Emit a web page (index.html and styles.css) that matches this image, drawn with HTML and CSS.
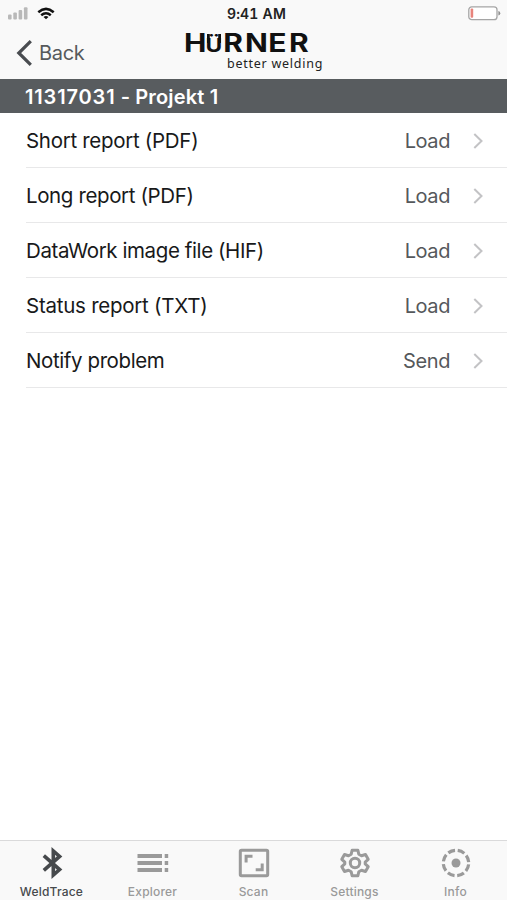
FILE: index.html
```html
<!DOCTYPE html>
<html lang="en">
<head>
<meta charset="utf-8">
<title>WeldTrace</title>
<link rel="stylesheet" href="styles.css">
</head>
<body>
<div class="app">
  <header class="top">
    <div class="status">
      <div class="signals">
        <svg width="20" height="13" viewBox="0 0 20 13" fill="#b9b9b9"><rect x="0" y="7.5" width="3.6" height="5" rx="1"/><rect x="5.3" y="5.5" width="3.6" height="7" rx="1"/><rect x="10.6" y="3" width="3.6" height="9.5" rx="1"/><rect x="15.9" y="0.3" width="3.6" height="12.2" rx="1"/></svg>
        <svg width="18" height="13" viewBox="0 0 18 13" fill="none" stroke="#111" stroke-width="2.5"><path d="M1.3 5.2Q9-1.5 16.7 5.2"/><path d="M4.2 8.2Q9 4.2 13.8 8.2"/><path d="M9 12.3L6.5 9.9Q9 7.9 11.5 9.9Z" fill="#111" stroke="none"/></svg>
      </div>
      <div class="clock">9:41 AM</div>
      <svg class="battery" width="33" height="15" viewBox="0 0 33 15"><rect x=".8" y=".8" width="28.2" height="12.9" rx="3" fill="#fff" stroke="#a5a5a5" stroke-width="1.3"/><rect x="2.6" y="2.6" width="2.6" height="9.2" rx="1" fill="#e8847c"/><path d="M30.4 5Q32.3 5.5 32.3 7.2T30.4 9.5Z" fill="#8f8f8f"/></svg>
    </div>
    <nav class="nav">
      <a class="back"><svg width="17" height="28" viewBox="0 0 17 28" fill="none" stroke="#494c50" stroke-width="3.2"><path d="M14.8 2.1L2.8 14L14.8 25.9"/></svg><span>Back</span></a>
      <div class="brand">
        <svg class="wordmark" width="128" height="20" viewBox="0 0 128 20">
          <text class="name" transform="scale(1.2 1)" y="19" x="-0.9 17 31.9 50.1 69.3 86.7">H<tspan class="umlaut">Ü</tspan>RNER</text>
          <path d="M22 1h2.8v9h-2.8zM33.2 1h2.8v9h-2.8z"/>
        </svg>
        <div class="slogan">better welding</div>
      </div>
    </nav>
  </header>
  <h1 class="title"><span class="serial">11317031</span> - Projekt 1</h1>
  <main class="list">
    <div class="row"><span class="label l1">Short report (PDF)</span><span class="action">Load</span><svg class="chev" viewBox="0 0 12 18"><path d="M2.3 2L9.5 9L2.3 16"/></svg></div>
    <div class="row"><span class="label l2">Long report (PDF)</span><span class="action">Load</span><svg class="chev" viewBox="0 0 12 18"><path d="M2.3 2L9.5 9L2.3 16"/></svg></div>
    <div class="row"><span class="label l3">DataWork image file (HIF)</span><span class="action">Load</span><svg class="chev" viewBox="0 0 12 18"><path d="M2.3 2L9.5 9L2.3 16"/></svg></div>
    <div class="row"><span class="label l4">Status report (TXT)</span><span class="action">Load</span><svg class="chev" viewBox="0 0 12 18"><path d="M2.3 2L9.5 9L2.3 16"/></svg></div>
    <div class="row"><span class="label l5">Notify problem</span><span class="action">Send</span><svg class="chev" viewBox="0 0 12 18"><path d="M2.3 2L9.5 9L2.3 16"/></svg></div>
  </main>
  <footer class="tabs">
    <a class="tab active"><svg viewBox="0 0 32 32"><path fill="none" stroke="currentColor" stroke-width="3.6" d="M7.8 8.6L23.6 22.6L17.3 28V4L23.6 9.4L7.8 23.4"/></svg><span>WeldTrace</span></a>
    <a class="tab"><svg viewBox="0 0 32 32"><path fill="currentColor" d="M.5 7H25v4H.5zM.5 14H25v4H.5zM.5 21H25v4H.5zM27.7 7h3.5v4h-3.5zM27.7 14h3.5v4h-3.5zM27.7 21h3.5v4h-3.5z"/></svg><span>Explorer</span></a>
    <a class="tab"><svg viewBox="0 0 32 32" fill="none" stroke="currentColor" stroke-width="3"><rect x="2.3" y="3.3" width="27.4" height="25.4" rx="1.2"/><path d="M8.1 15.5V9.2H14.5M24.2 16.5V22.8H17.7"/></svg><span>Scan</span></a>
    <a class="tab"><svg viewBox="0 0 32 32" fill="none" stroke="currentColor" stroke-width="3" stroke-linejoin="round"><path d="M13.1 3.2H18.9L19.8 7.3L22.5 8.8L26.5 7.5L29.2 12.3L26.2 15.1V16.9L29.2 19.7L26.5 24.5L22.5 23.2L19.8 24.7L18.9 28.8H13.1L12.2 24.7L9.5 23.2L5.5 24.5L2.8 19.7L5.8 16.9V15.1L2.8 12.3L5.5 7.5L9.5 8.8L12.2 7.3Z"/><circle cx="16" cy="16" r="4.7"/></svg><span>Settings</span></a>
    <a class="tab"><svg viewBox="0 0 32 32"><circle cx="16" cy="16" r="4.5" fill="currentColor"/><circle cx="16" cy="16" r="12.7" fill="none" stroke="currentColor" stroke-width="3.2" stroke-dasharray="7.2 2.775" stroke-dashoffset="-1.39"/></svg><span>Info</span></a>
  </footer>
</div>
</body>
</html>
```

FILE: styles.css
```css
* { box-sizing: border-box; }
body { margin: 0; background: #fff; font-family: Inter, "Liberation Sans", sans-serif; }
svg { display: block; flex: none; overflow: visible; }
.app { height: 900px; display: flex; flex-direction: column; overflow: hidden; }
.top { height: 79px; background: #f9f9f9; }
.status { height: 27px; display: grid; grid-template-columns: 1fr auto 1fr; align-items: center; padding: 0 6px 0 8px; }
.signals { display: flex; gap: 9px; }
.clock { font-size: 14px; font-weight: 600; color: #222; line-height: 27px; padding: 0 0 0 4px; letter-spacing: .2px; font-variant-numeric: tabular-nums; }
.battery { justify-self: end; }
.nav { height: 52px; display: grid; grid-template-columns: 185px 1fr; }
.back { display: flex; align-items: center; gap: 6px; height: 51px; padding-left: 16px; font-size: 20px; letter-spacing: -.3px; color: #56595c; }
.brand { padding-top: 6px; }
.name { font-size: 25px; font-weight: 700; fill: #111; }
.umlaut { font-size: 19px; }
.wordmark path { fill: #111; }
.slogan { margin: 3px 0 0 42px; font: 12.5px/16px "Noto Sans", sans-serif; letter-spacing: .75px; color: #222; white-space: nowrap; }
.title { margin: 0; height: 34px; padding-left: 25px; line-height: 36px; background: #585c5f; color: #fff; font-size: 20px; font-weight: 600; letter-spacing: .15px; }
.serial { letter-spacing: .85px; }
.list { flex: 1; padding-left: 26px; }
.row { height: 55px; display: flex; align-items: center; border-bottom: 1px solid #e8e8e9; padding: 2px 23px 0 0; font-size: 20px; }
.label { flex: 1; margin-top: -2px; color: #18191a; white-space: nowrap; font-size: 20.5px; }
.l1 { letter-spacing: -.3px; }
.l2 { letter-spacing: -.38px; }
.l3 { letter-spacing: -.4px; }
.l4 { letter-spacing: -.25px; }
.l5 { letter-spacing: -.4px; }
.action { color: #55585b; letter-spacing: -.4px; }
.chev { width: 12px; height: 18px; margin-left: 22px; fill: none; stroke: #c3c3c5; stroke-width: 2; }
.tabs { height: 60px; border-top: 1px solid #dadadb; background: #f9f9f9; display: grid; grid-template-columns: repeat(5, 1fr); padding: 0 1px; }
.tab { display: flex; flex-direction: column; align-items: center; padding-top: 6px; color: #9a9a9a; font-size: 12px; font-weight: 500; letter-spacing: .2px; }
.tab svg { width: 32px; height: 32px; }
.tab span { line-height: 16px; margin-top: 5px; }
.active { color: #46494c; }
```
